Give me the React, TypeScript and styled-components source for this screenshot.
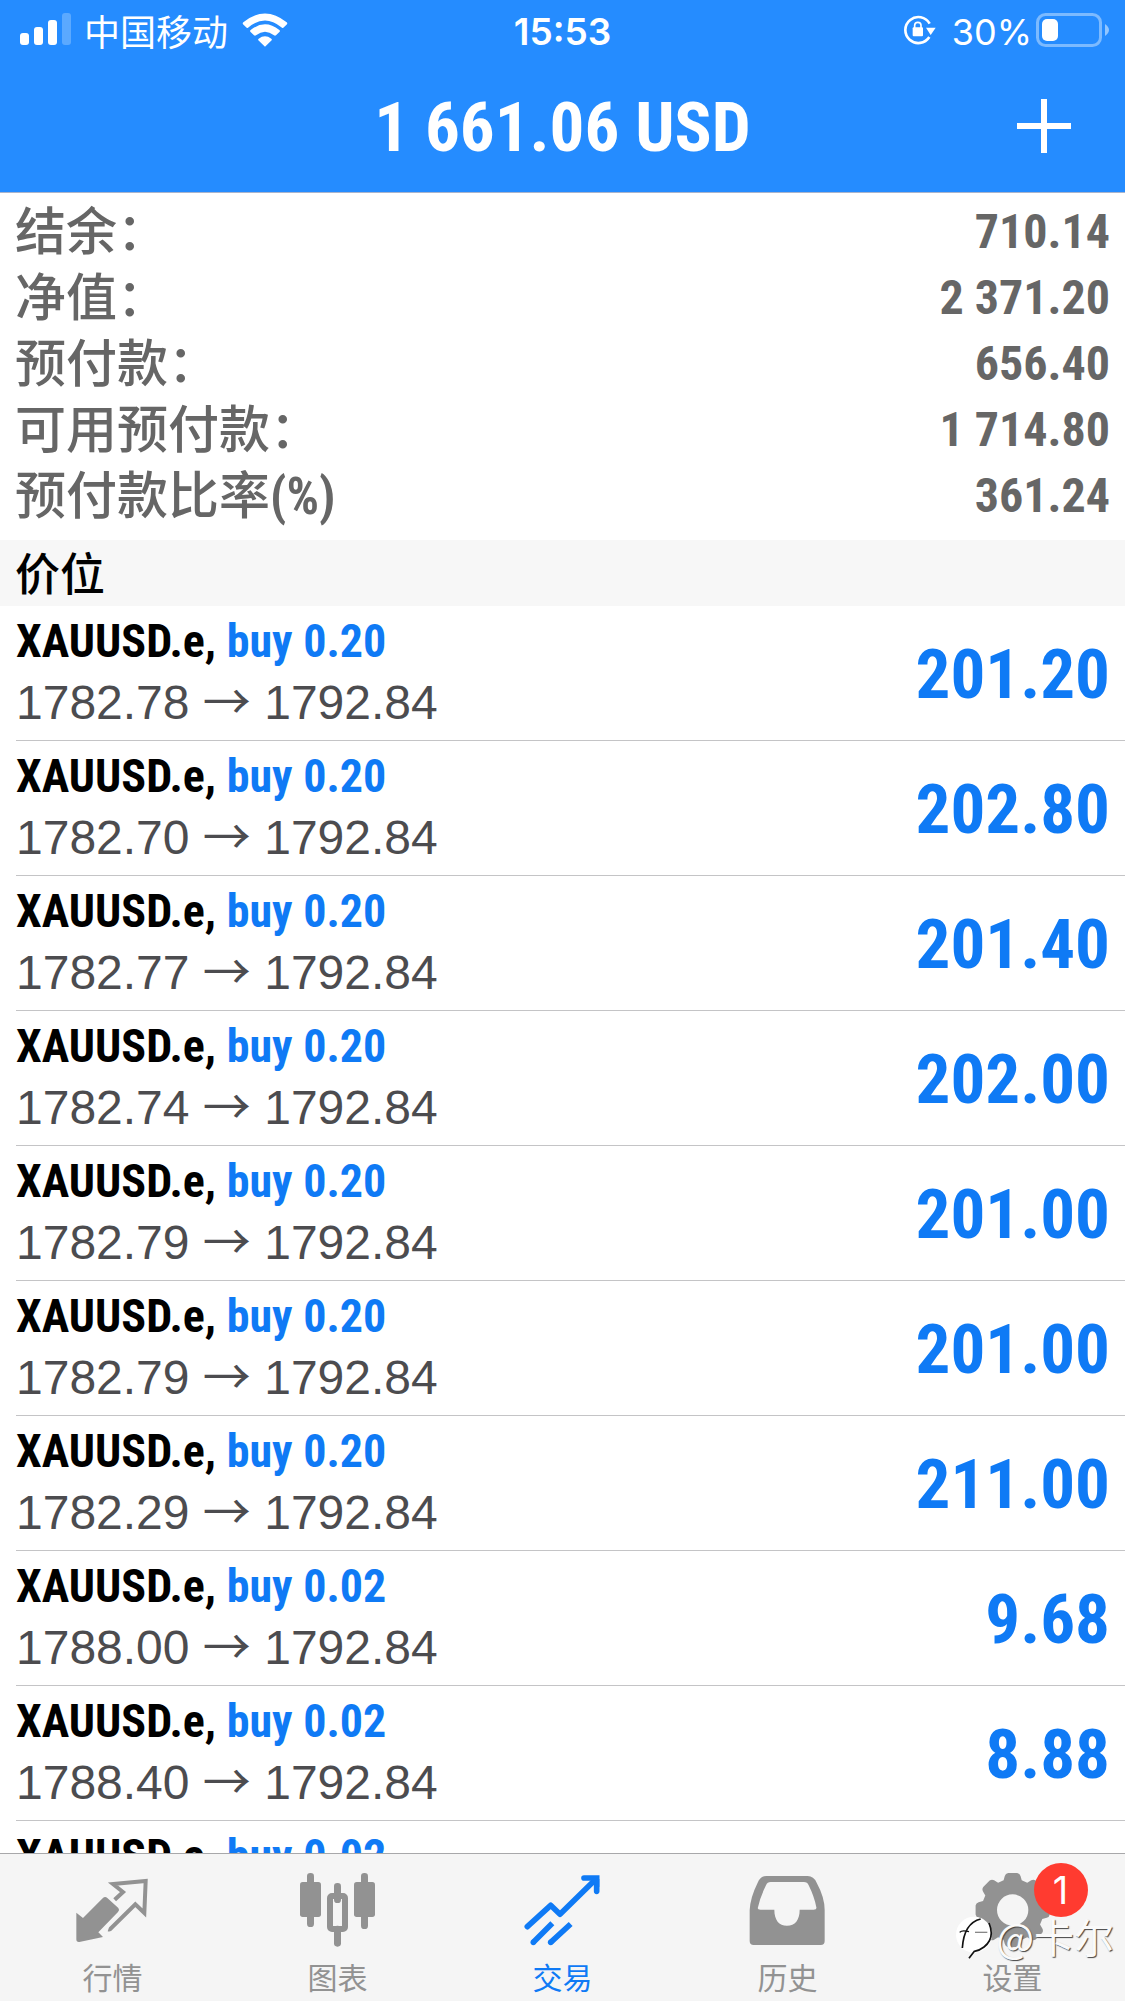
import React from "react";
import styled, { createGlobalStyle } from "styled-components";

const condensed = `"Roboto Condensed", "Liberation Sans Narrow", "Liberation Sans", "Noto Sans CJK SC", sans-serif`;
const system = `Inter, "Noto Sans CJK SC", sans-serif`;
const accent = "#0f7af5";

const GlobalStyle = createGlobalStyle`
  * { box-sizing: border-box; }
  body { margin: 0; background: #fff; }
  h1, h2, dl, dd, dt, ul, p { margin: 0; padding: 0; }
  button { border: 0; background: none; padding: 0; font: inherit; color: inherit; cursor: pointer; }
  svg { display: block; flex: none; }
`;

const Screen = styled.div`
  position: relative;
  display: flex;
  flex-direction: column;
  height: 100vh;
  overflow: hidden;
  font-family: ${system};
`;

const TopBar = styled.header`
  flex: none;
  background: #258cff;
  border-bottom: 1px solid #a9b4cc;
  color: #fff;
`;

const StatusBar = styled.div`
  display: grid;
  grid-template-columns: 1fr auto 1fr;
  align-items: center;
  height: 60px;
  padding: 0 16px;
  font-size: 36px;
  line-height: 56px;
`;

const StatusGroup = styled.div<{ $end?: boolean }>`
  display: flex;
  align-items: center;
  justify-content: ${(p) => (p.$end ? "flex-end" : "flex-start")};
  padding-left: 4px;
`;

const Carrier = styled.span`
  margin: 0 14px 0 12px;
  font-family: "Noto Sans CJK SC", sans-serif;
`;

const Clock = styled.time`
  padding-top: 4px;
  font-size: 37px;
  font-weight: 600;
`;

const BatteryLevel = styled.span`
  margin: 0 4px 0 16px;
  padding-top: 4px;
`;

const TitleBar = styled.div`
  display: grid;
  grid-template-columns: 1fr auto 1fr;
  align-items: center;
  height: 132px;
  padding: 0 54px;
`;

const Title = styled.h1`
  grid-column: 2;
  padding-top: 4px;
  font-family: ${condensed};
  font-size: 69px;
  line-height: 88px;
  font-weight: 700;
`;

const AddButton = styled.button`
  justify-self: end;
`;

const Content = styled.main`
  flex: 1;
  min-height: 0;
  overflow: hidden;
`;

const Summary = styled.dl`
  padding: 7px 15px 10px;
  color: #666;
  font-family: ${condensed};
  font-size: 48px;
  line-height: 64px;
  font-weight: 700;
`;

const SummaryRow = styled.div`
  display: flex;
  justify-content: space-between;
  height: 66px;
`;

const SummaryLabel = styled.dt`
  font-size: 51px;
  line-height: 66px;
  font-weight: 500;
`;

const Ratio = styled.span`
  font-weight: 700;
`;

const SectionTitle = styled.h2`
  height: 66px;
  padding: 0 15px;
  background: #f7f7f7;
  color: #000;
  font-family: "Noto Sans CJK SC", sans-serif;
  font-size: 45px;
  line-height: 64px;
  font-weight: 500;
`;

const Positions = styled.ul`
  padding-left: 16px;
  list-style: none;
`;

const Position = styled.li`
  display: flex;
  align-items: center;
  justify-content: space-between;
  height: 135px;
  padding-right: 15px;
  border-bottom: 1px solid #c4c4c6;
`;

const Deal = styled.p`
  color: #000;
  font-family: ${condensed};
  font-size: 46px;
  line-height: 60px;
  font-weight: 700;
`;

const Side = styled.span`
  color: ${accent};
`;

const Prices = styled.p`
  color: #4c4c4f;
  font-family: "Liberation Sans", sans-serif;
  font-size: 48px;
  line-height: 64px;
`;

const Arrow = styled.span`
  font-family: "Noto Sans CJK SC", sans-serif;
  line-height: 48px;
`;

const Profit = styled.strong`
  padding-top: 4px;
  color: ${accent};
  font-family: ${condensed};
  font-size: 69px;
  line-height: 88px;
  font-weight: 700;
`;

const TabBar = styled.nav`
  flex: none;
  display: grid;
  grid-template-columns: repeat(5, 1fr);
  height: 148px;
  border-top: 1px solid #a8a8aa;
  background: #f5f5f5;
`;

const Tab = styled.button<{ $active?: boolean }>`
  display: flex;
  flex-direction: column;
  align-items: center;
  padding-top: 15px;
  color: ${(p) => (p.$active ? accent : "#929292")};
  font-family: "Noto Sans CJK SC", sans-serif;
  font-size: 30px;
  line-height: 40px;
  gap: 9px;
`;

const TabIcon = styled.span`
  position: relative;
`;

const Badge = styled.span`
  position: absolute;
  left: 60px;
  top: -6px;
  width: 54px;
  height: 54px;
  border-radius: 50%;
  background: #ff3b30;
  color: #fff;
  font-family: ${system};
  font-size: 38px;
  line-height: 54px;
  text-align: center;
`;

const Watermark = styled.div`
  position: absolute;
  right: 11px;
  bottom: 42px;
  display: flex;
  align-items: center;
  color: #fafafa;
  font-family: "Noto Sans CJK SC", sans-serif;
  font-size: 40px;
  line-height: 42px;
  text-shadow: 1px 1px 1px #444;
  pointer-events: none;
`;

const SignalIcon = () => (
  <svg width="52" height="34" viewBox="0 0 52 34" fill="currentColor" role="img" aria-label="信号">
    <rect x="0" y="20" width="9" height="12" rx="3" />
    <rect x="14" y="14" width="9" height="18" rx="3" />
    <rect x="28" y="7" width="9" height="25" rx="3" />
    <rect x="42" y="0" width="9" height="32" rx="3" opacity=".25" />
  </svg>
);

const WifiIcon = () => (
  <svg width="46" height="34" viewBox="0 0 138 102" fill="currentColor" role="img" aria-label="Wi-Fi">
    <path d="M69 101 L49 82 Q47 79 50 77 Q69 63 88 77 Q91 79 89 82 Z" />
    <path d="M25 56 Q23 53 26 51 Q69 17 112 51 Q115 53 113 56 L102 67 Q99 69 96 67 Q69 45 42 67 Q39 69 36 67 Z" />
    <path d="M3 34 Q1 31 4 28 Q69 -25 134 28 Q137 31 135 34 L124 44 Q121 46 118 43 Q69 2 20 43 Q17 46 14 44 Z" />
  </svg>
);

const LockIcon = () => (
  <svg width="33" height="30" viewBox="0 0 99 90" fill="none" stroke="currentColor" role="img" aria-label="方向锁定">
    <path d="M80 26 A39 39 0 1 0 79 66" strokeWidth="8" />
    <path d="M69 38 H98 L83 60 Z" fill="currentColor" stroke="none" />
    <rect x="29" y="37" width="31" height="27" rx="3" fill="currentColor" stroke="none" />
    <path d="M35 40 V31 Q35 22 44.500 22 Q54 22 54 31 V40" strokeWidth="5" />
  </svg>
);

const BatteryIcon = () => (
  <svg width="73" height="34" viewBox="0 0 73 34" fill="none" role="img" aria-label="电池">
    <rect x="1.500" y="1.500" width="63" height="31" rx="8" stroke="#fff" strokeOpacity=".4" strokeWidth="3" />
    <rect x="6" y="6" width="16" height="22" rx="5" fill="#fff" />
    <path d="M69 11 Q73 14 73 17 Q73 20 69 23 Z" fill="#fff" fillOpacity=".5" />
  </svg>
);

const PlusIcon = () => (
  <svg width="54" height="54" viewBox="0 0 54 54" stroke="currentColor" strokeWidth="6" aria-hidden="true">
    <path d="M27 0 V54 M0 27 H54" />
  </svg>
);

const TabSvg = ({ children }: { children: React.ReactNode }) => (
  <svg width="78" height="78" viewBox="0 0 234 234" fill="currentColor" aria-hidden="true">
    {children}
  </svg>
);

const QuotesIcon = () => (
  <TabSvg>
    <path d="M7 131 L27 147 L86 88 Q93 81 100 87 L133 117 Q138 123 132 129 L73 190 L87 204 L16 219 Q7 220 7 211 Z" />
    <path d="M122 92 L147 69 L117 45 L215 36 L211 132 L184 106 L109 180 Q106 182 103 181" fill="none" stroke="currentColor" strokeWidth="12" />
  </TabSvg>
);

const ChartIcon = () => (
  <TabSvg>
    <rect x="24" y="12" width="21" height="162" rx="10" />
    <rect x="3" y="39" width="63" height="105" rx="8" />
    <rect x="105" y="42" width="21" height="60" rx="10" />
    <rect x="105" y="170" width="21" height="63" rx="10" />
    <rect x="93" y="81" width="45" height="99" rx="6" fill="none" stroke="currentColor" strokeWidth="18" />
    <rect x="186" y="12" width="21" height="168" rx="10" />
    <rect x="165" y="39" width="63" height="105" rx="8" />
  </TabSvg>
);

const TradeIcon = () => (
  <TabSvg>
    <g fill="none" stroke="currentColor" strokeWidth="17">
      <path d="M10 173 L80 109 L108 136 L212 34" strokeLinecap="round" strokeLinejoin="round" />
      <path d="M180 27 H218 V67" strokeLinecap="round" />
      <path d="M28 220 L85 163 M80 220 L140 165" />
    </g>
    <path d="M196 30 H226 V54 Z" />
    <circle cx="28" cy="220" r="8.500" />
    <circle cx="80" cy="220" r="8.500" />
  </TabSvg>
);

const HistoryIcon = () => (
  <TabSvg>
    <path
      fillRule="evenodd"
      d="M2 123 Q4 85 26 41 Q34 21 52 21 H176 Q194 21 203 41 Q227 85 227 123 V216 Q227 228 215 228 H14 Q2 228 2 216 Z M27 115 Q24 122 34 122 H76 C76 153 90 170 114 170 C138 170 152 153 152 122 H194 Q204 122 202 115 Q196 83 179 49 Q175 39 165 39 H65 Q55 39 51 49 Q34 83 27 115 Z"
    />
  </TabSvg>
);

const gearPath = (() => {
  const at = (deg: number, r: number) => {
    const a = ((deg - 90) * Math.PI) / 180;
    return `${(116 + r * Math.cos(a)).toFixed(1)} ${(123 + r * Math.sin(a)).toFixed(1)}`;
  };
  let d = "";
  for (let i = 0; i < 8; i++) {
    const c = i * 45;
    d += `${i ? "L" : "M"}${at(c - 17, 93)} L${at(c - 13, 105)} Q${at(c - 11, 112)} ${at(c - 7, 112)} L${at(c + 7, 112)} Q${at(c + 11, 112)} ${at(c + 13, 105)} L${at(c + 17, 93)} `;
  }
  return d + "Z M69 123 a47 47 0 1 0 94 0 a47 47 0 1 0 -94 0 Z";
})();

const SettingsIcon = () => (
  <TabSvg>
    <path fillRule="evenodd" d={gearPath} />
  </TabSvg>
);

const WatermarkLogo = () => (
  <svg width="42" height="46" viewBox="0 0 126 138" fill="none" aria-hidden="true">
    <circle cx="60" cy="65" r="54" fill="#fff" />
    <g stroke="#111" strokeWidth="5">
      <path d="M25 105 Q30 30 80 18" />
      <path d="M17 58 Q24 50 45 56" strokeWidth="4" />
      <path d="M63 58 H100" stroke="#888" strokeWidth="4" />
      <path d="M105 30 Q124 76 90 102 Q76 113 61 115 L45 136" />
    </g>
  </svg>
);

const summary = [
  { label: "结余：", value: "710.14" },
  { label: "净值：", value: "2 371.20" },
  { label: "预付款：", value: "656.40" },
  { label: "可用预付款：", value: "1 714.80" },
  { label: "预付款比率", suffix: "(%)", value: "361.24" },
];

const positions = [
  { lots: "0.20", open: "1782.78", profit: "201.20" },
  { lots: "0.20", open: "1782.70", profit: "202.80" },
  { lots: "0.20", open: "1782.77", profit: "201.40" },
  { lots: "0.20", open: "1782.74", profit: "202.00" },
  { lots: "0.20", open: "1782.79", profit: "201.00" },
  { lots: "0.20", open: "1782.79", profit: "201.00" },
  { lots: "0.20", open: "1782.29", profit: "211.00" },
  { lots: "0.02", open: "1788.00", profit: "9.68" },
  { lots: "0.02", open: "1788.40", profit: "8.88" },
  { lots: "0.02", open: "", profit: "" },
];

const tabs = [
  { label: "行情", Icon: QuotesIcon },
  { label: "图表", Icon: ChartIcon },
  { label: "交易", Icon: TradeIcon, active: true },
  { label: "历史", Icon: HistoryIcon },
  { label: "设置", Icon: SettingsIcon, badge: 1 },
];

export default function App() {
  return (
    <Screen>
      <GlobalStyle />
      <TopBar>
        <StatusBar>
          <StatusGroup>
            <SignalIcon />
            <Carrier>中国移动</Carrier>
            <WifiIcon />
          </StatusGroup>
          <Clock>15:53</Clock>
          <StatusGroup $end>
            <LockIcon />
            <BatteryLevel>30%</BatteryLevel>
            <BatteryIcon />
          </StatusGroup>
        </StatusBar>
        <TitleBar>
          <Title>1 661.06 USD</Title>
          <AddButton type="button" aria-label="新订单">
            <PlusIcon />
          </AddButton>
        </TitleBar>
      </TopBar>

      <Content>
        <Summary>
          {summary.map((s) => (
            <SummaryRow key={s.label}>
              <SummaryLabel>
                {s.label}
                {s.suffix && <Ratio>{s.suffix}</Ratio>}
              </SummaryLabel>
              <dd>{s.value}</dd>
            </SummaryRow>
          ))}
        </Summary>
        <SectionTitle>价位</SectionTitle>
        <Positions>
          {positions.map((p, i) => (
            <Position key={i}>
              <div>
                <Deal>
                  XAUUSD.e, <Side>buy {p.lots}</Side>
                </Deal>
                <Prices>
                  {p.open ? (
                    <>
                      {p.open} <Arrow>→</Arrow> 1792.84
                    </>
                  ) : (
                    "\u00a0"
                  )}
                </Prices>
              </div>
              <Profit>{p.profit}</Profit>
            </Position>
          ))}
        </Positions>
      </Content>

      <TabBar>
        {tabs.map(({ label, Icon, active, badge }) => (
          <Tab key={label} type="button" $active={active} aria-current={active ? "page" : undefined}>
            <TabIcon>
              <Icon />
              {badge && <Badge>{badge}</Badge>}
            </TabIcon>
            {label}
          </Tab>
        ))}
      </TabBar>

      <Watermark>
        <WatermarkLogo />
        @卡尔
      </Watermark>
    </Screen>
  );
}
